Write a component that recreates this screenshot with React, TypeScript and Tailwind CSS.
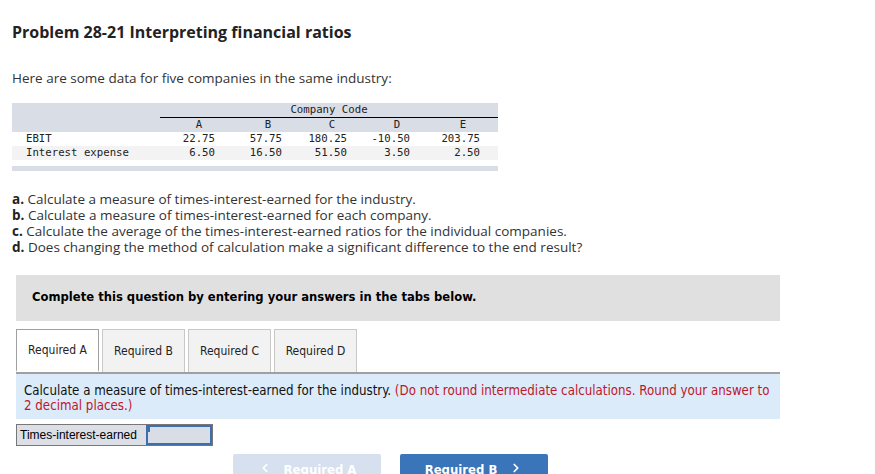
import { ChevronLeft, ChevronRight } from 'lucide-react'

const cols = [
  { key: 'A', w: 'w-[78px]', pr: 'pr-[23px]', ebit: '22.75', int: '6.50' },
  { key: 'B', w: 'w-[60px]', pr: 'pr-[16px]', ebit: '57.75', int: '16.50' },
  { key: 'C', w: 'w-[68px]', pr: 'pr-[19px]', ebit: '180.25', int: '51.50' },
  { key: 'D', w: 'w-[62px]', pr: 'pr-[18px]', ebit: '-10.50', int: '3.50' },
  { key: 'E', w: 'w-[70px]', pr: 'pr-[18px]', ebit: '203.75', int: '2.50' },
]

const questions = [
  ['a.', 'Calculate a measure of times-interest-earned for the industry.'],
  ['b.', 'Calculate a measure of times-interest-earned for each company.'],
  ['c.', 'Calculate the average of the times-interest-earned ratios for the individual companies.'],
  ['d.', 'Does changing the method of calculation make a significant difference to the end result?'],
]

const tabs = ['Required A', 'Required B', 'Required C', 'Required D']

const sans = "font-['Open_Sans','Noto_Sans',sans-serif]"
const mono = "font-['DejaVu_Sans_Mono','Liberation_Mono',monospace]"
const narrow = "font-['DejaVu_Sans_Condensed','DejaVu_Sans',sans-serif]"

export default function App() {
  return (
    <div className="w-[875px] h-[474px] overflow-hidden bg-white text-[#222]">
      <h1 className={`${sans} pl-3 pt-[22px] text-[16px] font-bold leading-5 text-[#222]`}>
        Problem 28-21 Interpreting financial ratios
      </h1>
      <p className={`${sans} pl-3 mt-[28px] text-[13.5px] leading-4 text-[#333]`}>
        Here are some data for five companies in the same industry:
      </p>

      {/* data table */}
      <div className={`${mono} ml-3 mt-[17px] w-[486px] text-[10.7px] text-[#222]`}>
        <div className="bg-[#d9dde6]">
          <div className="flex h-[15px]">
            <div className="w-[148px]" />
            <div className="flex-1 border-b border-black text-center leading-[14px]">Company Code</div>
          </div>
          <div className="flex h-[14px] leading-[14px]">
            <div className="w-[148px]" />
            {cols.map(c => (
              <div key={c.key} className={`${c.w} text-center`}>{c.key}</div>
            ))}
          </div>
        </div>
        <div className="flex h-[14px] leading-[14px]">
          <div className="w-[148px] pl-[14px]">EBIT</div>
          {cols.map(c => (
            <div key={c.key} className={`${c.w} ${c.pr} text-right`}>{c.ebit}</div>
          ))}
        </div>
        <div className="flex h-[14px] leading-[14px] bg-[#f3f3f3]">
          <div className="w-[148px] pl-[14px]">Interest expense</div>
          {cols.map(c => (
            <div key={c.key} className={`${c.w} ${c.pr} text-right`}>{c.int}</div>
          ))}
        </div>
        <div className="mt-[6px] h-[5px] bg-[#d9dde6]" />
      </div>

      <div className={`${sans} pl-3 mt-[20px] text-[13.5px] leading-4 text-[#333]`}>
        {questions.map(([l, t]) => (
          <div key={l}><span className="font-bold text-[#222]">{l}</span> {t}</div>
        ))}
      </div>

      <div className="ml-4 mt-[20px] w-[764px] h-[46px] bg-[#e0e0e0] pl-4 pt-[8px]">
        <span className={`${narrow} text-[12.9px] font-bold text-black`}>
          Complete this question by entering your answers in the tabs below.
        </span>
      </div>

      {/* tabs */}
      <div className={`${narrow} ml-4 mt-[8px] w-[764px] flex gap-[3px] border-b-2 border-[#a0a0a0] text-[12px]`}>
        {tabs.map((t, i) => (
          <div
            key={t}
            className={`h-[43px] w-[83px] flex items-center justify-center -mb-[2px] border ${
              i === 0
                ? 'bg-white border-[#a0a0a0] border-b-white border-b-2 text-[#222]'
                : 'bg-[#f2f2f2] border-[#c8c8c8] border-b-0 mb-0 h-[41px] text-[#222]'
            }`}
          >
            {t}
          </div>
        ))}
      </div>

      <div className={`${narrow} ml-4 w-[764px] h-[45px] bg-[#dbebf9] pl-2 pr-[10px] pt-[9px] text-[13.2px] leading-[15px] text-[#111]`}>
        Calculate a measure of times-interest-earned for the industry.{' '}
        <span className="text-[#c0162b]">
          (Do not round intermediate calculations. Round your answer to 2 decimal places.)
        </span>
      </div>

      <div className="ml-4 mt-[5px] flex h-[22px] w-[197px] border border-[#777] bg-[#dcdfe5]">
        <div className="w-[129px] flex items-center pl-[3px] text-[12px] font-['Liberation_Sans',Arial,sans-serif] text-black">
          Times-interest-earned
        </div>
        <div className="relative flex-1 border-2 border-[#3b6fb0] bg-[#d9dde6]">
          <div className="absolute left-0 top-0 h-[5px] w-[2px] bg-[#3b6fb0]" />
        </div>
      </div>

      <div className={`${narrow} mt-[8px] flex gap-[19px] pl-[233px]`}>
        <div className="flex h-[30px] w-[148px] items-start justify-center gap-3 rounded-t-[2px] bg-[#d6e0ef] pt-[6px] text-[13px] font-bold text-white">
          <ChevronLeft size={14} strokeWidth={3} className="mt-[1px]" />
          Required A
        </div>
        <div className="flex h-[30px] w-[148px] items-start justify-center gap-3 rounded-t-[2px] bg-[#3a74b9] pt-[6px] text-[13px] font-bold text-white">
          Required B
          <ChevronRight size={14} strokeWidth={3} className="mt-[1px]" />
        </div>
      </div>
    </div>
  )
}
